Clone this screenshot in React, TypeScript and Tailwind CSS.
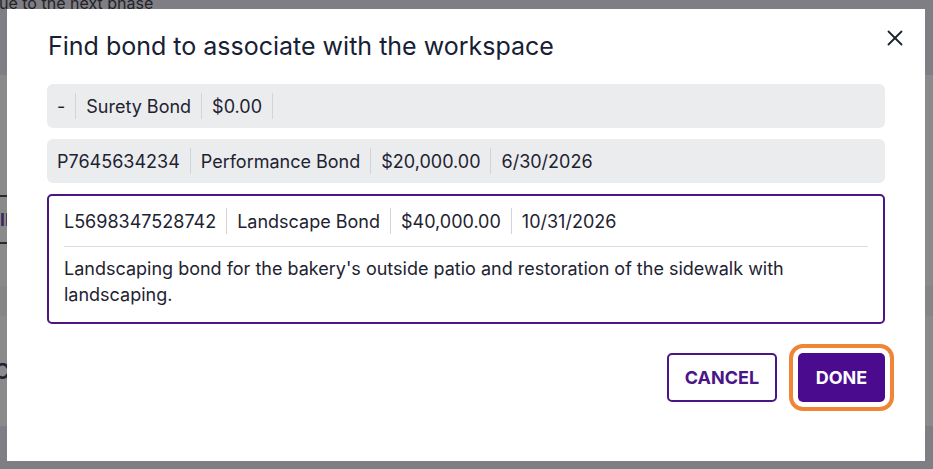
import { X } from 'lucide-react'

const font = { fontFamily: 'Inter, "Noto Sans", "Liberation Sans", sans-serif' }

type Bond = { number: string; type: string; amount: string; date: string; description?: string }

const bonds: Bond[] = [
  { number: '-', type: 'Surety Bond', amount: '$0.00', date: '' },
  { number: 'P7645634234', type: 'Performance Bond', amount: '$20,000.00', date: '6/30/2026' },
  {
    number: 'L5698347528742',
    type: 'Landscape Bond',
    amount: '$40,000.00',
    date: '10/31/2026',
    description: "Landscaping bond for the bakery's outside patio and restoration of the sidewalk with landscaping.",
  },
]

function BondFields({ bond }: { bond: Bond }) {
  const fields = [bond.number, bond.type, bond.amount, bond.date]
  return (
    <div className="flex items-center">
      {fields.map((f, i) => (
        <span
          key={i}
          className={
            i === 0
              ? 'flex h-[26px] items-center pr-[10px]'
              : 'flex h-[26px] items-center border-l border-[#d3d4d8] px-[10px]'
          }
        >
          {f}
        </span>
      ))}
    </div>
  )
}

export default function App() {
  return (
    <div className="relative h-[469px] w-[933px] overflow-hidden bg-[#8a8a8b]" style={font}>
      {/* dimmed page behind the dialog */}
      <div className="flex h-full flex-col">
        <div className="h-[75px] bg-[#7f7e84]">
          <p className="-ml-[1px] -mt-[9px] text-[16px] leading-[24px] text-[#232328]">ue to the next phase</p>
        </div>
        <div className="h-[120px]" />
        <div className="h-[2px] w-[8px] bg-[#2c2836]" />
        <div className="flex h-[45px] items-center text-[18px] font-bold text-[#3a2a5a]">ll</div>
        <div className="h-[2px] w-[8px] bg-[#2c2836]" />
        <div className="h-[42px]" />
        <div className="h-[30px] bg-[#858585]" />
        <div className="flex h-[110px] items-center text-[22px] font-semibold text-[#1e2430]">
          <span className="-ml-[6px]">C</span>
        </div>
        <div className="flex-1 bg-[#7f7e84]" />
      </div>

      {/* dialog */}
      <div className="absolute left-[7px] top-[9px] flex h-[452px] w-[918px] flex-col bg-white px-[40px] pt-[21px] text-[#1e2331]">
        <button className="absolute right-[17px] top-[16px] text-[#1e2331]">
          <X size={26} strokeWidth={1.7} />
        </button>
        <h2 className="pl-[1px] text-[25px] leading-[32px] text-[#182033]">Find bond to associate with the workspace</h2>

        <div className="mt-[22px] flex flex-col gap-[11px] text-[18px]">
          {bonds.slice(0, 2).map((b) => (
            <div key={b.number} className="flex h-[44px] items-center rounded-[6px] bg-[#ebecee] pl-[10px]">
              <BondFields bond={b} />
            </div>
          ))}
          <div className="rounded-[5px] border-2 border-[#4b1586] bg-white">
            <div className="px-[15px]">
              <div className="flex h-[51px] items-center border-b border-[#dcdde0] text-[18px]">
                <BondFields bond={bonds[2]} />
              </div>
            </div>
            <p className="px-[15px] pb-[14px] pt-[9px] text-[18px] leading-[26px]">{bonds[2].description}</p>
          </div>
        </div>

        <div className="mt-[29px] flex justify-end gap-[21px]">
          <button className="h-[49px] w-[110px] rounded-[5px] border-2 border-[#4b1586] text-[18px] font-bold text-[#4b1586]">
            CANCEL
          </button>
          <button className="h-[49px] w-[87px] rounded-[5px] bg-[#4b0b8f] text-[18px] font-bold text-white outline-4 outline-offset-[5px] outline-[#ef8535]">
            DONE
          </button>
        </div>
      </div>
    </div>
  )
}
